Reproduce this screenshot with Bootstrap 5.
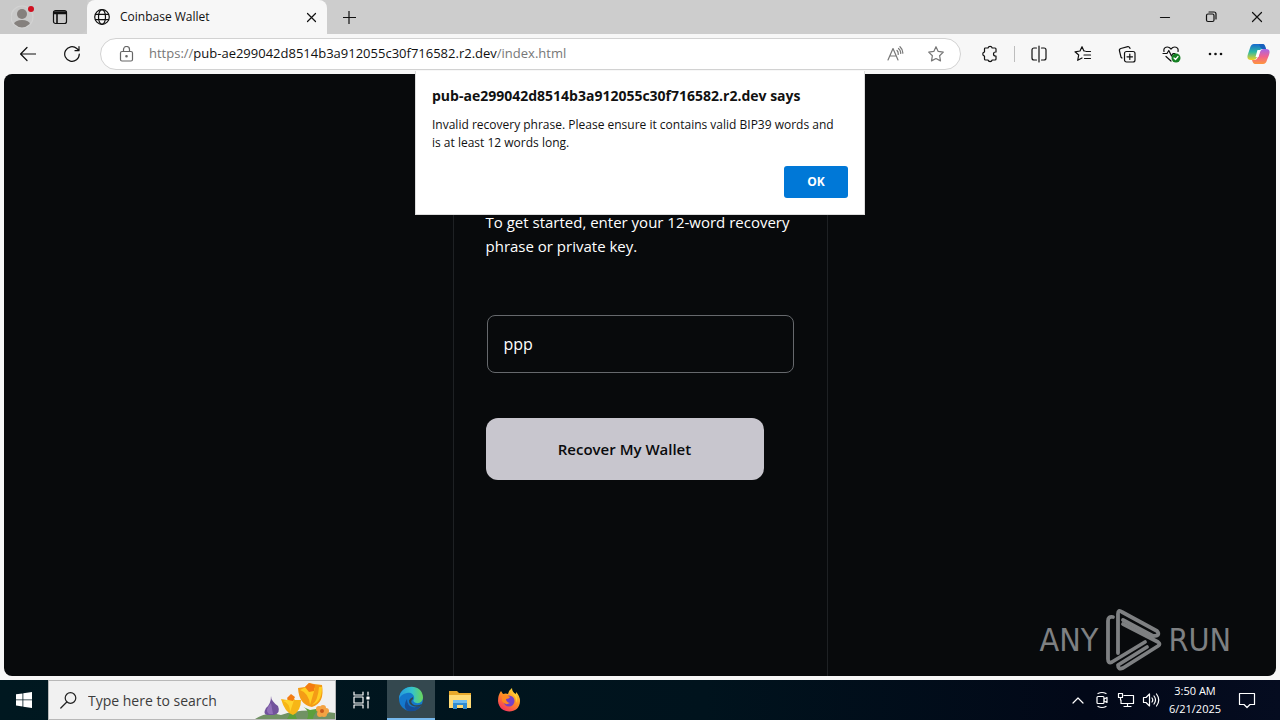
<!DOCTYPE html>
<html lang="en">
<head>
<meta charset="utf-8">
<meta name="viewport" content="width=device-width, initial-scale=1">
<title>Desktop with browser dialog</title>
<link href="https://cdn.jsdelivr.net/npm/bootstrap@5.3.0/dist/css/bootstrap.min.css" rel="stylesheet">
<style>
body{font-family:"Open Sans","Noto Sans",sans-serif;font-size:12px;color:#111;background:#f7f7f7}
svg{display:block;flex:none;fill:none;stroke:currentColor;stroke-width:1.2;stroke-linecap:round;stroke-linejoin:round}
button{border:0;background:none;padding:0;color:inherit}
.tabstrip{height:34px;background:#cdcdcd}
.profile-area{width:87px;padding-left:11px;gap:17px;background:#c9c9c9;border-bottom-right-radius:8px}
.tab-active{width:240px;background:#f7f7f7;border-radius:8px 8px 0 0;padding:0 10px 0 7px}
.tab-title{margin-left:10px}
.win-buttons{gap:30px;padding-right:15px}
.toolbar{height:40px;padding-left:20px;padding-right:10px}
.address{height:32px;border:1px solid #d2d2d2;border-radius:16px;background:#fff;padding:0 16px 0 18px;margin-left:20px;margin-right:20px}
.address-text{font-size:13px;color:#777;margin-left:15px}
.address-text b{font-weight:400;color:#111}
.tools{gap:26px}
.tools .vr{margin:0 -11px;height:16px;align-self:center}
.tools .copilot{margin-left:-4px}
.viewport-pane{margin:0 4px 4px;border-radius:8px;background:#080a0c}
.wallet{width:375px;padding:136px 32px 0;border:solid #1e2124;border-width:0 1px;color:#fff}
.wallet label{font-size:15px;line-height:24px}
.wallet input{height:58px;margin:57px 0 45px 1px;width:307px;background:#080a0c;border:1px solid #66696d;border-radius:8px;color:#fff;font-size:16px;padding:0 16px}
.wallet button{width:278px;height:62px;border-radius:12px;background:#c8c6ce;color:#0a0b0d;font-size:15px;font-weight:600}
.alert-box{top:71px;left:50%;margin-left:-225px;width:450px;height:144px;background:#fff;padding:16px;border:1px solid #ddd;border-top:0}
.alert-box h1{font-size:14px;line-height:18px;font-weight:700;margin:0 0 11px}
.alert-box p{line-height:18px;margin:0 0 14px;padding-right:8px}
.alert-box button{width:64px;height:32px;border-radius:3px;background:#0078d7;color:#fff;font-weight:700}
.watermark{right:45px;bottom:4px;color:#7e8082;font:32px "DejaVu Sans Condensed",sans-serif;gap:6px}
.taskbar{height:40px;background:linear-gradient(90deg,#001820,#00131d 55%,#020818 85%,#050c20);color:#fff}
.start{width:48px}
.search-box{width:288px;background:#f1f1f1;border:1px solid #b8b8b8;color:#222;padding-left:11px;overflow:hidden}
.search-box input{border:0;background:none;outline:0;font-size:14px;width:150px;padding:0;margin-left:11px}
.search-box input::placeholder{color:#3c3c3c;opacity:1}
.task{width:49px}
.task-active{width:48px;margin-left:2px;background:#34484f;border-bottom:2px solid #76b9ed}
.tray{gap:7px;padding-right:24px}
.clock{width:64px;margin-left:-4px;line-height:18px;font-size:11px;text-align:center}
</style>
</head>
<body class="d-flex flex-column min-vh-100 position-relative">
<header>
<div class="tabstrip d-flex">
 <div class="profile-area d-flex align-items-center">
  <button aria-label="Profile"><svg width="24" height="24" viewBox="0 0 24 24"><g fill="#85807d" stroke="none"><circle cx="11" cy="9" r="5"/><ellipse cx="11" cy="19" rx="8" ry="4"/></g><circle cx="11" cy="12" r="11" stroke="#d2d2d2"/><circle cx="20" cy="4" r="3" fill="#d01020" stroke="none"/></svg></button>
  <button aria-label="Tab actions"><svg width="16" height="16" viewBox="0 0 16 16"><rect x="1.500" y="1.500" width="13" height="13" rx="2"/><path d="M2 3h12M2 4.500h12M5 5v9" stroke-width="1.600"/></svg></button>
 </div>
 <div class="tab-active d-flex align-items-center">
  <svg width="16" height="16" viewBox="0 0 16 16"><circle cx="8" cy="8" r="7.300"/><ellipse cx="8" cy="8" rx="3.500" ry="7.300"/><path d="M1.500 5.300h13M1.500 10.700h13"/></svg>
  <span class="tab-title flex-grow-1">Coinbase Wallet</span>
  <button aria-label="Close tab"><svg width="11" height="11" viewBox="0 0 11 11"><path d="M1.500 1.500l8 8m0-8l-8 8"/></svg></button>
 </div>
 <button class="ms-3" aria-label="New tab"><svg width="13" height="13" viewBox="0 0 13 13"><path d="M6 0v13M0 6.500h13"/></svg></button>
 <div class="win-buttons ms-auto d-flex align-items-center">
  <button aria-label="Minimize"><svg width="16" height="16" viewBox="0 0 16 16"><path d="M3.500 8.500h9"/></svg></button>
  <button aria-label="Restore"><svg width="16" height="16" viewBox="0 0 16 16"><rect x="3.500" y="5" width="7.500" height="7.500" rx="1.500"/><path d="M6 3h5a2 2 0 012 2v5"/></svg></button>
  <button aria-label="Close"><svg width="16" height="16" viewBox="0 0 16 16"><path d="M3.500 3.500l9 9m0-9l-9 9"/></svg></button>
 </div>
</div>
<div class="toolbar d-flex align-items-center">
 <button aria-label="Back"><svg width="16" height="16" viewBox="0 0 16 16"><path d="M15.500 8H.6M7 1.500L.6 8 7 14.500"/></svg></button>
 <button class="ms-4 ps-1" aria-label="Refresh"><svg width="16" height="16" viewBox="0 0 16 16"><path d="M15.300 8a7.300 7.300 0 11-2.500-5.500L15 4.500M15 .7v4h-4"/></svg></button>
 <div class="address d-flex align-items-center flex-grow-1">
  <svg width="15" height="16" viewBox="0 0 15 16" color="#666"><rect x="1.500" y="5.500" width="12" height="9.500" rx="1.500"/><path d="M4.500 5.500v-2a3 3 0 016 0v2"/><circle cx="7.500" cy="10.200" r=".7" fill="currentColor"/></svg>
  <div class="address-text flex-grow-1">https://<b>pub-ae299042d8514b3a912055c30f716582.r2.dev</b>/index.html</div>
  <button aria-label="Read aloud"><svg width="17" height="16" viewBox="0 0 17 16" color="#777"><path d="M1 14L6 2.500 11 14M3 10h6M10 4.500q1.500 1.500 1.200 4M11.500 2.500q2.500 2 2.200 5M13 .7q3 2.800 2.800 6.500"/></svg></button>
  <button class="ms-4" aria-label="Favorite"><svg width="16" height="16" viewBox="0 0 16 16" color="#777"><path d="M8 .7l2.200 4.700 5.100.7-3.700 3.600.9 5.200L8 12.500l-4.500 2.400.9-5.200L.7 6.100l5.100-.7z"/></svg></button>
 </div>
 <div class="tools d-flex align-items-center">
  <button aria-label="Extensions"><svg width="18" height="18" viewBox="0 0 18 18"><path d="M4 3h3a2.200 2.200 0 014.200 0H14a1 1 0 011 1v3h-.5a2 2 0 000 4h.5v3a1 1 0 01-1 1h-2.800a2.200 2.200 0 01-4.200 0H4.500a1 1 0 01-1-1v-2.800a2.200 2.200 0 010-4.300V4a1 1 0 01.5-1z"/></svg></button>
  <div class="vr"></div>
  <button aria-label="Split screen"><svg width="18" height="18" viewBox="0 0 18 18"><path d="M6.500 3H4a2 2 0 00-2 2v8a2 2 0 002 2h2.500M11.500 3H14a2 2 0 012 2v8a2 2 0 01-2 2h-2.500M9 1v16"/></svg></button>
  <button aria-label="Favorites list"><svg width="18" height="18" viewBox="0 0 18 18"><path d="M11 6L9.800 5.800 8 1.700 6 6l-5 .8L4.700 10l-1 5.300L8 13M12 6.500h4.500M10 10h6.500M10.500 13.500h6"/></svg></button>
  <button aria-label="Collections"><svg width="18" height="18" viewBox="0 0 18 18"><rect x="6.500" y="6.500" width="10.500" height="10.500" rx="2"/><path d="M11.800 9v5.500M9 11.800h5.500M4 13l-1-.8L1.500 6a2 2 0 011.300-2.500l7-1.800A2 2 0 0112 3.500"/></svg></button>
  <button aria-label="Browser essentials"><svg width="19" height="18" viewBox="0 0 19 18"><path d="M1 8.500h4l1.800-3L9.500 11l1.500-2.500h2M2 6.500C1 2 6 .5 9 4c3-3.500 8-2 7 2.500M4 11.500l5 4.500"/><circle cx="14" cy="13" r="4.500" fill="#158023" stroke="none"/><path d="M12 13l1.500 1.500 2.500-3" stroke="#fff"/></svg></button>
  <button aria-label="More"><svg width="18" height="18" viewBox="0 0 18 18"><g fill="currentColor" stroke="none"><circle cx="3" cy="9" r="1.300"/><circle cx="8.500" cy="9" r="1.300"/><circle cx="14" cy="9" r="1.300"/></g></svg></button>
  <button class="copilot" aria-label="Copilot"><svg width="23" height="22" viewBox="0 0 23 22"><defs><linearGradient id="cpa" x2="0" y2="1"><stop stop-color="#1769cf"/><stop offset=".5" stop-color="#2db9a3"/><stop offset="1" stop-color="#f5d321"/></linearGradient><linearGradient id="cpb" x2="0" y2="1"><stop stop-color="#a467e8"/><stop offset=".5" stop-color="#f06290"/><stop offset="1" stop-color="#ff963c"/></linearGradient></defs><g stroke="none"><path fill="url(#cpa)" d="M7 1h8q2 0 3 3l1 2h-4q-2 0-3 3l-2 5q-1 3-4 3H4q-5 0-3-6l2-6q1-4 4-4z"/><path fill="url(#cpb)" d="M16 21H8q-2 0-3-4h3q2 0 3-3l2-5q1-3 4-3h2q5 0 3 6l-2 5q-1 4-4 4z"/><path fill="#1760bd" d="M12 1h4q2 0 3 5h-4q-2-1-3-5z"/><path fill="#fff" d="M10.500 7h3l-2 7h-3z"/></g></svg></button>
 </div>
</div>
</header>
<main class="viewport-pane flex-grow-1 d-flex justify-content-center position-relative">
 <form class="wallet" onsubmit="return false">
  <label for="phrase">To get started, enter your 12-word recovery phrase or private key.</label>
  <input id="phrase" type="text" value="ppp" autocomplete="off">
  <button type="button">Recover My Wallet</button>
 </form>
 <div class="watermark position-absolute d-flex align-items-center">
  <span>ANY</span>
  <svg width="58" height="64" viewBox="0 0 58 64"><g stroke-width="3.800"><path d="M9 9Q4 8 4 13V51Q4 56 8 54L41 34"/><path d="M14 45V6Q14 1 18 4L53 23Q57 28 49 28L19 12"/><path d="M19 16L54 34Q57 36 54 38L19 60Q14 62 14 57L43 39"/></g></svg>
  <span>RUN</span>
 </div>
</main>
<section class="alert-box position-absolute" role="alertdialog" aria-labelledby="says">
 <h1 id="says">pub-ae299042d8514b3a912055c30f716582.r2.dev says</h1>
 <p>Invalid recovery phrase. Please ensure it contains valid BIP39 words and is at least 12 words long.</p>
 <div class="d-flex justify-content-end"><button>OK</button></div>
</section>
<footer class="taskbar d-flex">
 <button class="start d-flex align-items-center justify-content-center" aria-label="Start"><svg width="16" height="16" viewBox="0 0 16 16"><path fill="#fff" stroke="none" d="M0 2.300l6.500-.9v6.100H0zM7.300 1.300L16 0v7.500H7.300zM0 8.300h6.500v6.200L0 13.600zM7.300 8.300H16V16l-8.700-1.300z"/></svg></button>
 <div class="search-box d-flex align-items-center">
  <svg width="17" height="17" viewBox="0 0 17 17"><circle cx="10.500" cy="6" r="5.300"/><path d="M6.800 10L.8 16"/></svg>
  <input type="search" aria-label="Search" placeholder="Type here to search">
  <svg class="ms-auto" width="80" height="38" viewBox="0 0 80 38" stroke="none"><g stroke="none"><path fill="#719264" d="M0 38Q12 30 26 34Q48 26 80 32V38z"/><path fill="#5c9f3c" d="M32 38Q38 30 31 27h10Q39 33 42 38zM52 38Q56 29 46 25l9 4 12-2Q58 32 58 38z"/><path fill="#72539c" d="M16 15q0 5 7 10 3 7-4 9H13Q7 34 11 27 16 23 16 15z"/><path fill="#9170b8" d="M16 22q-7 8-2 11h4z"/><path fill="#f7b617" d="M26 18l6 1 4-5 4 5h6q0 11-8 15-8-2-12-16z"/><path fill="#ffd32d" d="M28 20q7 2 7 11l4-12q-6-1-11 1z"/><path fill="#f49c16" d="M43 7l7-1 4-4 5 1 8 1q3 18-10 22-13-2-14-19z"/><path fill="#ffce22" d="M45 9q9 3 10 15L60 7l-7-2zM64 6q-1 14-7 18 10-3 10-18z"/><path fill="#f37c13" d="M32 17l4-4 4 3-2 4-5-1zM50 6l4-4 6 2-1 6-5 1z"/><g fill="#f4a343"><circle cx="64" cy="28" r="3"/><circle cx="68" cy="27" r="3"/><circle cx="71" cy="30" r="3"/><circle cx="69" cy="33" r="3"/><circle cx="65" cy="33" r="3"/></g><circle cx="67" cy="30" r="2" fill="#c95a1c"/></g></svg>
 </div>
 <button class="task d-flex align-items-center justify-content-center" aria-label="Task view"><svg width="18" height="18" viewBox="0 0 18 18"><path d="M2 1v3h9V1M2 17v-3h9v3M2 6h9v6H2zM16 1v3M16 10v7"/><path d="M15 6h2v2h-2z" fill="#fff"/></svg></button>
 <button class="task-active d-flex align-items-center justify-content-center" aria-label="Edge"><svg width="26" height="26" viewBox="0 0 26 26"><defs><linearGradient id="ea"><stop stop-color="#2499df"/><stop offset=".55" stop-color="#35c3ca"/><stop offset="1" stop-color="#6bd657"/></linearGradient></defs><g stroke="none"><circle cx="13" cy="13" r="12" fill="#1478cc"/><path fill="url(#ea)" d="M1 13C2-3 25-3 25 12q-1 6-7 5-4-1-2-4c1-4-3-7-7-6Q3 8 1 13z"/><path fill="#164d95" d="M9 13q0 7 6 8 5 1 9-3-5 9-14 7-6-4-1-12z"/><path fill="#34484f" d="M15 13q-4 3 1 6 4 1 8-1l-1 2q-6 2-10-1-5-5 2-8z"/></g></svg></button>
 <button class="task d-flex align-items-center justify-content-center" aria-label="File Explorer"><svg width="22" height="20" viewBox="0 0 22 20"><g stroke="none"><path fill="#e8a92c" d="M0 1h8l2 2h12v15H0z"/><path fill="#ffda75" d="M0 5h22v13H0z"/><path fill="#318bd0" d="M4 10h14v9h-4v-4H8v4H4z"/><path fill="#6fbcf0" d="M4 10h14v3H4z"/></g></svg></button>
 <button class="task d-flex align-items-center justify-content-center" aria-label="Firefox"><svg width="24" height="24" viewBox="0 0 24 24"><defs><linearGradient id="fx" x1=".8" x2=".2" y2="1"><stop stop-color="#ffe33b"/><stop offset=".45" stop-color="#ff9222"/><stop offset="1" stop-color="#f62b64"/></linearGradient></defs><g stroke="none"><path fill="url(#fx)" d="M4 3l2 3q3-1 5 0 1-4 4-6 0 4 4 6V4q4 4 4 9c0 14-21 14-22 0Q1 7 4 3z"/><circle cx="12" cy="13" r="5.500" fill="#7541c7"/><path fill="#ff8a20" d="M5 8q4-2 8 1-1 2-4 2 0 3 4 4-5 3-8-2z"/><path fill="#ffd238" d="M14 5q6 3 5 10 2-4 0-8z"/></g></svg></button>
 <div class="tray ms-auto d-flex align-items-center">
  <button aria-label="Hidden icons"><svg width="18" height="16" viewBox="0 0 18 16"><path d="M4 11l5-5 5 5"/></svg></button>
  <button aria-label="Camera"><svg width="16" height="18" viewBox="0 0 16 18"><rect x="3" y="5.500" width="7" height="7" rx="1"/><path d="M10 8l3-1.500v5L10 10M4 2.500q4-2 8 0M4 15.500q4 2 8 0"/></svg></button>
  <button aria-label="Network"><svg width="18" height="18" viewBox="0 0 18 18"><path d="M7 4.500h9.500v8H4V9M10.500 12.500v3M7 15.500h7M1.500 2.500h4v4h-4zM3.500 6.500V9"/></svg></button>
  <button aria-label="Volume"><svg width="18" height="18" viewBox="0 0 18 18"><path d="M1.500 6.500h2.500L7.500 3v12L4 11.500H1.500zM10 7q1.500 2 0 4M12 5q3 4 0 8M14.500 3q4.500 6 0 12"/></svg></button>
  <div class="clock">3:50 AM<br>6/21/2025</div>
  <button class="ms-1" aria-label="Notifications"><svg width="18" height="18" viewBox="0 0 18 18"><path d="M1.500 2.500h15v11H12l-3 3-3-3H1.500z"/></svg></button>
 </div>
</footer>
<script src="https://cdn.jsdelivr.net/npm/bootstrap@5.3.0/dist/js/bootstrap.bundle.min.js"></script>
</body>
</html>
